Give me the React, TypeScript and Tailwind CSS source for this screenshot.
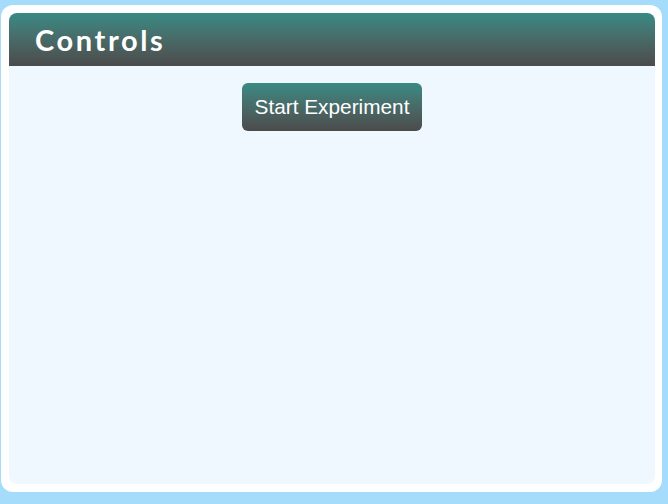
export default function App() {
  return (
    <div className="w-[668px] h-[504px] bg-[#a6dcfb] overflow-hidden pt-[5px] pl-[1px]">
      <div className="w-[661px] h-[487px] bg-white rounded-[12px] p-[8px] pr-[7px]">
        <div className="h-full bg-[#eff8fe] rounded-[8px] overflow-hidden flex flex-col">
          <div className="h-[53px] bg-gradient-to-b from-[#388a85] to-[#4b4b4b] flex items-center pl-[26px]">
            <h2
              className="text-white font-bold text-[29px] tracking-[2.6px] leading-none"
              style={{ fontFamily: "Lato, 'Noto Sans', sans-serif" }}
            >
              Controls
            </h2>
          </div>
          <div className="flex justify-center pt-[17px]">
            <button
              className="h-[48px] px-[13px] rounded-[6px] bg-gradient-to-b from-[#388a85] to-[#4b4b4b] text-white text-[20.8px]"
              style={{ fontFamily: "'Liberation Sans', Arial, sans-serif" }}
            >
              Start Experiment
            </button>
          </div>
        </div>
      </div>
    </div>
  );
}
